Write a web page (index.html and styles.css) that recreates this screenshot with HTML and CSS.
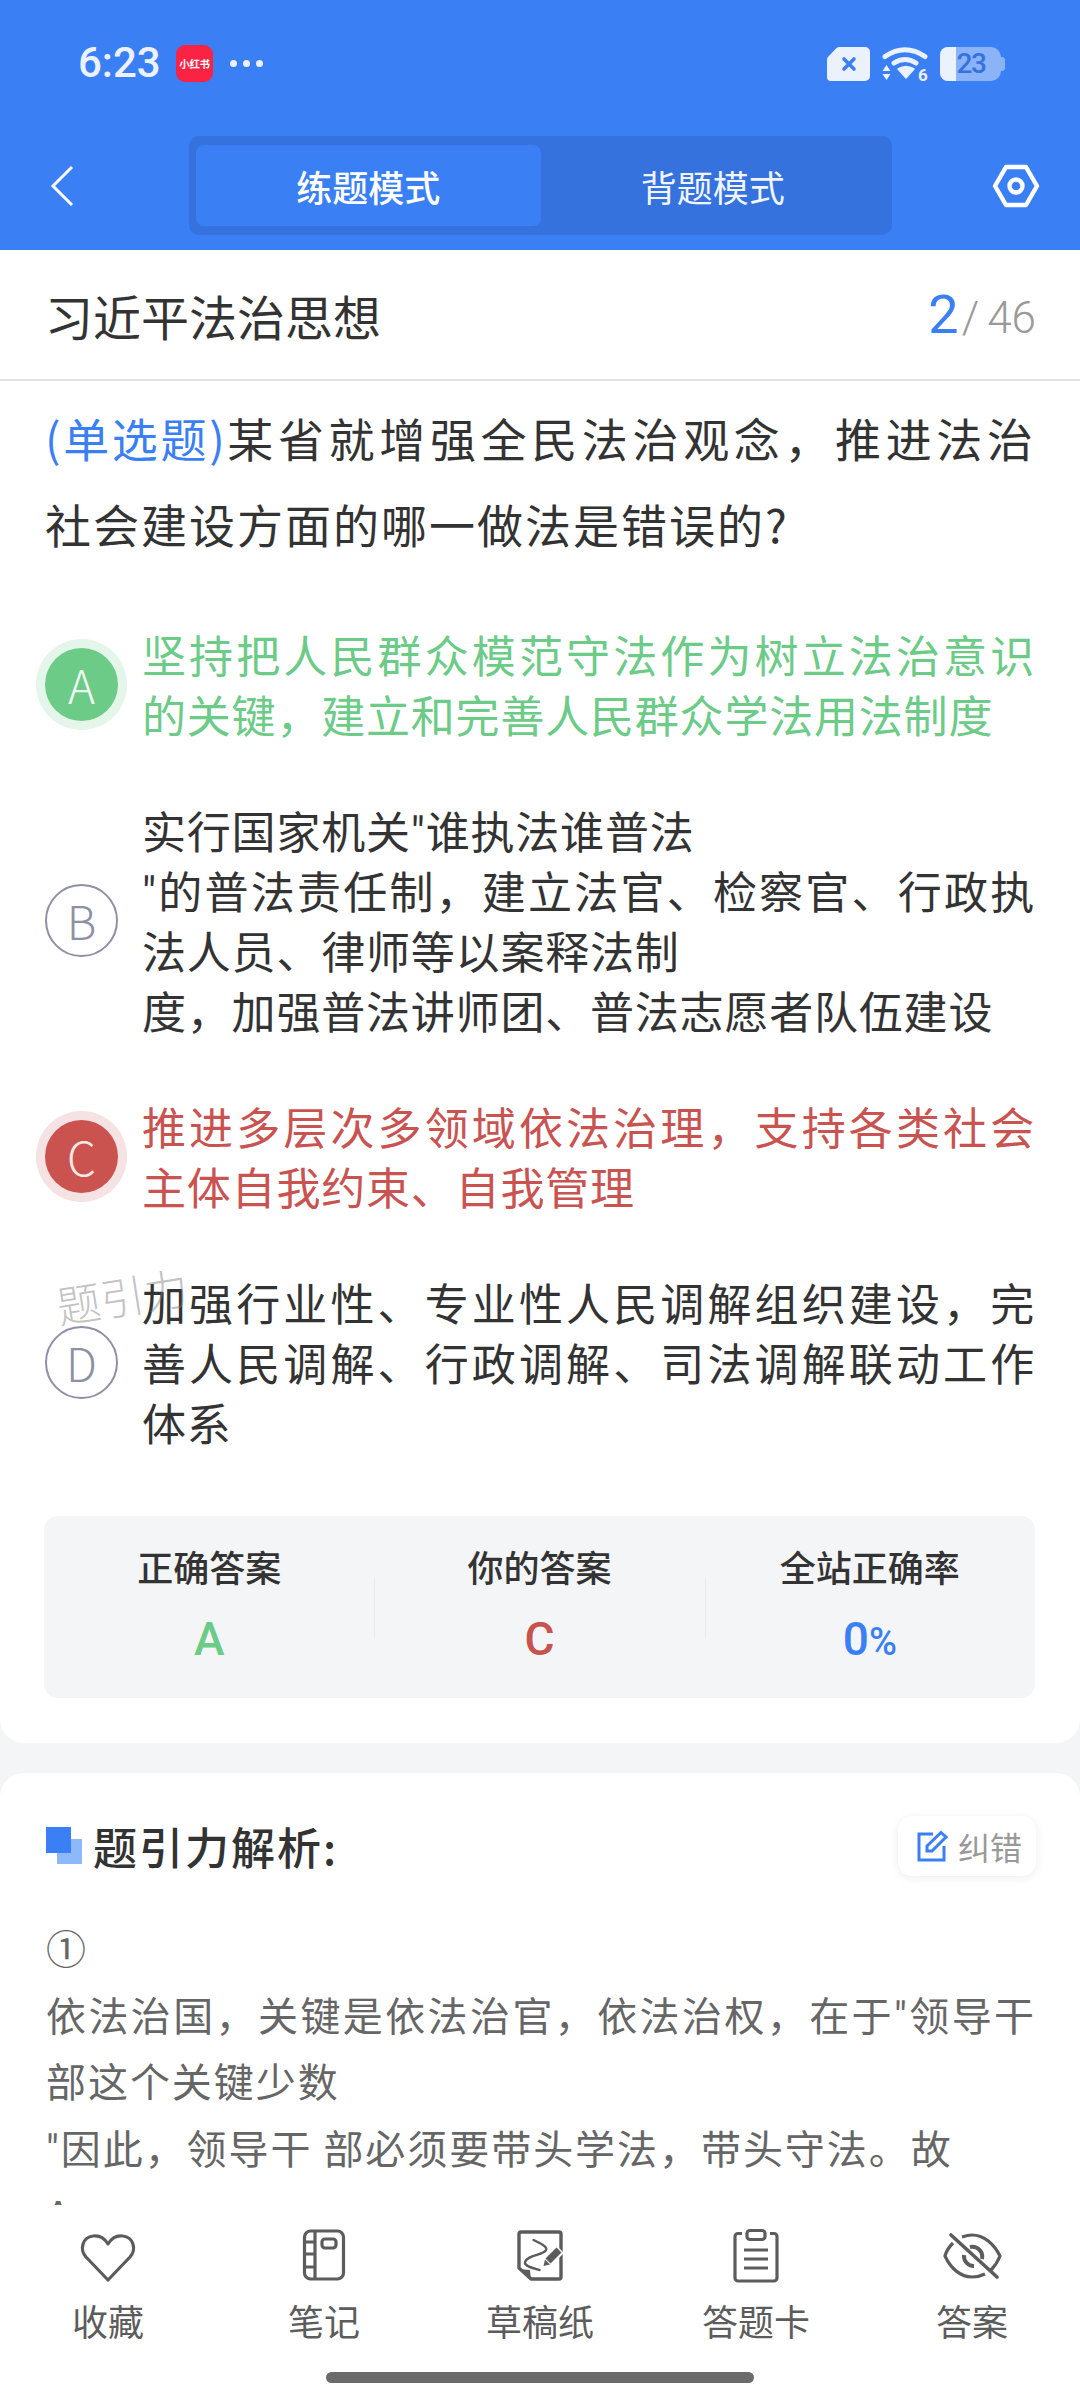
FILE: index.html
```html
<!DOCTYPE html>
<html lang="zh">
<head>
<meta charset="utf-8">
<title>练题模式</title>
<link rel="stylesheet" href="styles.css">
</head>
<body>
<div class="screen">
  <header class="top">
    <div class="status">
      <div class="status-left">
        <span class="time">6:23</span>
        <span class="app-badge">小红书</span>
        <span class="dots"><i></i><i></i><i></i></span>
      </div>
      <div class="status-right">
        <svg class="ic-sim" viewBox="0 0 43 34"><path d="M12 0H38a5 5 0 0 1 5 5V29a5 5 0 0 1-5 5H4a4 4 0 0 1-4-4V12a3 3 0 0 1 1-2L9 1.500A4 4 0 0 1 12 0Z" fill="#ebf1fd"/><path d="M17 12L27 22M27 12L17 22" stroke="#3b7ff5" stroke-width="3.600" stroke-linecap="round"/></svg>
        <svg class="ic-wifi" viewBox="0 0 46 36"><path d="M3 10.500Q23 -3 43 10.500" fill="none" stroke="#ebf1fd" stroke-width="5" stroke-linecap="round"/><path d="M12 17Q23 10 34 17" fill="none" stroke="#ebf1fd" stroke-width="5" stroke-linecap="round"/><path d="M16 23Q24 18 32 23L24 32Z" fill="#ebf1fd" stroke="#ebf1fd" stroke-width="1.500" stroke-linejoin="round"/><path d="M0.500 25L4.500 19L8.500 25ZM0.500 28L8.500 28L4.500 34Z" fill="#ebf1fd"/><text x="36" y="34.500" class="wifi-6">6</text></svg>
        <div class="battery">
          <div class="battery-body">
            <span class="battery-fill"></span>
            <span class="battery-num">23</span>
          </div>
          <span class="battery-nub"></span>
        </div>
      </div>
    </div>
    <nav class="navbar">
      <svg class="ic-back" viewBox="0 0 26 44"><path d="M24 3L5 22L24 41" fill="none" stroke="#fff" stroke-width="3"/></svg>
      <div class="tabs">
        <div class="tab tab-active">练题模式</div>
        <div class="tab">背题模式</div>
      </div>
      <svg class="ic-hex" viewBox="0 0 48 44"><path d="M14 3H34L45 22L34 41H14L3 22Z" fill="none" stroke="#fff" stroke-width="4.400" stroke-linejoin="round"/><circle cx="24" cy="22" r="6.500" fill="none" stroke="#fff" stroke-width="4.400"/></svg>
    </nav>
  </header>

  <main class="scroll">
    <section class="card card-question">
      <div class="title-row">
        <h1 class="chapter">习近平法治思想</h1>
        <div class="progress"><span class="progress-now">2</span><span class="progress-sep">/</span><span class="progress-total">46</span></div>
      </div>
      <p class="question"><span class="q-first"><span class="q-type">(单选题)</span>某省就增强全民法治观念，推进法治</span><span class="q-rest">社会建设方面的哪一做法是错误的?</span></p>

      <div class="option option-right">
        <span class="letter">A</span>
        <p class="option-text">坚持把人民群众模范守法作为树立法治意识的关键，建立和完善人民群众学法用法制度</p>
      </div>
      <div class="option">
        <span class="letter">B</span>
        <p class="option-text">实行国家机关<span class="quote">"</span>谁执法谁普法<br><span class="quote">"</span>的普法责任制，建立法官、检察官、行政执法人员、律师等以案释法制<br>度，加强普法讲师团、普法志愿者队伍建设</p>
      </div>
      <div class="option option-wrong">
        <span class="letter">C</span>
        <p class="option-text">推进多层次多领域依法治理，支持各类社会主体自我约束、自我管理</p>
      </div>
      <div class="option">
        <span class="letter">D</span>
        <p class="option-text">加强行业性、专业性人民调解组织建设，完善人民调解、行政调解、司法调解联动工作体系</p>
      </div>

      <div class="stats">
        <div class="stat"><div class="stat-label">正确答案</div><div class="stat-value green">A</div></div>
        <div class="stat"><div class="stat-label">你的答案</div><div class="stat-value red">C</div></div>
        <div class="stat"><div class="stat-label">全站正确率</div><div class="stat-value blue">0<small>%</small></div></div>
      </div>
    </section>

    <section class="card card-analysis">
      <div class="analysis-head">
        <div class="analysis-title">
          <span class="squares"><i class="sq-back"></i><i class="sq-front"></i></span>
          <h2>题引力解析:</h2>
        </div>
        <div class="fix-btn">
          <svg class="ic-fix" viewBox="0 0 34 34"><path d="M17 5H3V31H28V17" fill="none" stroke="#3b7ff5" stroke-width="3"/><path d="M11 17L25 3.500L30 8L16 22H11Z" fill="none" stroke="#3b7ff5" stroke-width="3"/></svg>
          <span>纠错</span>
        </div>
      </div>
      <div class="analysis-body">
        <p>①</p>
        <p>依法治国，关键是依法治官，依法治权，在于<span class="quote">"</span>领导干部这个关键少数<br><span class="quote">"</span>因此，领导干 部必须要带头学法，带头守法。故<br>A</p>
      </div>
    </section>
  </main>

  <div class="watermark">题引力</div>

  <footer class="bottom">
    <div class="tools">
      <div class="tool">
        <svg class="tool-ic" viewBox="0 0 60 60"><path d="M30 55L8 32C1 24 5 12 15 11C22 10 27 14 30 19C33 14 38 10 45 11C55 12 59 24 52 32Z" fill="none" stroke="#5c5c5c" stroke-width="3.200" stroke-linejoin="round"/></svg>
        <span>收藏</span>
      </div>
      <div class="tool">
        <svg class="tool-ic" viewBox="0 0 60 60"><rect x="10.500" y="6" width="39" height="48" rx="6" fill="none" stroke="#5c5c5c" stroke-width="3.200"/><path d="M21 6V54M10.500 17H21M10.500 29H21M10.500 42H21" fill="none" stroke="#5c5c5c" stroke-width="3.200"/><rect x="28" y="14" width="14" height="9" rx="3" fill="none" stroke="#5c5c5c" stroke-width="3.200"/></svg>
        <span>笔记</span>
      </div>
      <div class="tool">
        <svg class="tool-ic" viewBox="0 0 60 60"><path d="M11 7H49a2 2 0 0 1 2 2V52a2 2 0 0 1-2 2H21L9 43V9a2 2 0 0 1 2-2Z" fill="none" stroke="#5c5c5c" stroke-width="3.400" stroke-linejoin="round"/><path d="M9 44L21 55L20 45Z" fill="#5c5c5c"/><path d="M23.500 15C30 18 38 22 36 25C34 30 17 30 15 37C14 41 22 43 29.500 45" fill="none" stroke="#5c5c5c" stroke-width="2.400" stroke-linecap="round"/><path d="M37 37L50 24" stroke="#fff" stroke-width="11"/><path d="M38 36L49 25" stroke="#5c5c5c" stroke-width="7"/><path d="M33.500 41L35 34.500L40 39.500Z" fill="#5c5c5c"/></svg>
        <span>草稿纸</span>
      </div>
      <div class="tool">
        <svg class="tool-ic" viewBox="0 0 60 60"><path d="M16 8.500H12a3 3 0 0 0-3 3V53a3 3 0 0 0 3 3H48a3 3 0 0 0 3-3V11.500a3 3 0 0 0-3-3H44" fill="none" stroke="#5c5c5c" stroke-width="3.200"/><rect x="21" y="5.500" width="18" height="9" rx="3" fill="none" stroke="#5c5c5c" stroke-width="3.200"/><path d="M18 25H42M18 34H42M18 43H42" stroke="#5c5c5c" stroke-width="3.200"/></svg>
        <span>答题卡</span>
      </div>
      <div class="tool">
        <svg class="tool-ic" viewBox="0 0 60 60"><path d="M11 18C7 22 4 27 3 31C9 44 19 52 30 52C35 52 39 51 43 49M20 12C23 11 27 10 30 10C42 10 52 19 58 31C56 36 53 41 49 45" fill="none" stroke="#5c5c5c" stroke-width="3.200"/><path d="M9 10L55 52" stroke="#5c5c5c" stroke-width="3.600" stroke-linecap="round"/><path d="M28 22A10 10 0 0 1 40 34M22 30A10 10 0 0 0 32 41" fill="none" stroke="#5c5c5c" stroke-width="4"/></svg>
        <span>答案</span>
      </div>
    </div>
    <div class="home-bar"></div>
  </footer>
</div>
</body>
</html>
```

FILE: styles.css
```css
* { box-sizing: border-box; }
html, body { margin: 0; padding: 0; }
body { font-family: "Noto Sans CJK SC", "Noto Sans", sans-serif; background: #f4f5f7; color: #333; }
p, h1, h2 { margin: 0; font-weight: 400; }

.screen { position: relative; width: 1080px; height: 2400px; overflow: hidden; background: #f4f5f7; }

/* header */
.top { height: 250px; background: #3b7ff5; }
.status { height: 136px; padding: 44px 75px 0 78px; display: flex; justify-content: space-between; align-items: flex-start; }
.status-left { display: flex; align-items: center; height: 38px; }
.time { flex: 0 0 98px; font-family: Roboto, sans-serif; font-size: 42px; font-weight: 500; color: #ebf1fd; line-height: 38px; }
.app-badge { flex: 0 0 37px; height: 37px; border-radius: 9px; background: #fb2343; color: #fff; font-size: 10.500px; font-weight: 700; display: flex; align-items: center; justify-content: center; white-space: nowrap; letter-spacing: -.3px; }
.dots { display: flex; gap: 6px; margin-left: 17px; }
.dots i { width: 7px; height: 7px; border-radius: 50%; background: #ebf1fd; }
.status-right { display: flex; align-items: center; gap: 12px; padding-top: 2px; }
.ic-sim { width: 43px; height: 34px; }
.ic-wifi { width: 46px; height: 36px; }
.wifi-6 { font-family: Roboto, sans-serif; font-size: 17px; font-weight: 700; fill: #ebf1fd; }
.battery { display: flex; align-items: center; }
.battery-body { position: relative; width: 61px; height: 34px; border-radius: 8px 10px 10px 8px; background: #8ab3f8; overflow: hidden; }
.battery-fill { position: absolute; left: 0; top: 0; bottom: 0; width: 16px; background: #ebf1fd; }
.battery-num { position: absolute; left: 16px; top: 0; width: 30px; text-align: center; font-family: Roboto, sans-serif; font-size: 28px; font-weight: 500; line-height: 34px; color: #3572de; letter-spacing: -1.500px; }
.battery-nub { width: 4px; height: 14px; background: #8ab3f8; border-radius: 0 3px 3px 0; }

.navbar { display: flex; align-items: center; height: 99px; padding: 0 40px 0 48px; }
.ic-back { width: 26px; height: 44px; }
.tabs { display: flex; width: 703px; height: 99px; margin-left: 115px; padding: 9px 7px; background: #3572de; border-radius: 10px; }
.tab { flex: 1; display: flex; align-items: center; justify-content: center; color: #f0f5ff; font-size: 36px; border-radius: 8px; }
.tab-active { background: #3b7ff5; font-weight: 500; color: #fff; }
.ic-hex { width: 48px; height: 44px; margin-left: auto; }

/* question card */
.card { background: #fff; }
.card-question { border-radius: 0 0 24px 24px; padding-bottom: 45px; }
.title-row { height: 131px; padding: 0 44px 0 45px; display: flex; align-items: center; justify-content: space-between; border-bottom: 2px solid #e1e1e1; }
.chapter { font-size: 48px; color: #333; }
.progress { display: flex; align-items: baseline; font-family: Roboto, "Noto Sans", sans-serif; color: #999; font-size: 44px; font-weight: 300; }
.progress-now { color: #3b7ff5; font-size: 54px; font-weight: 400; }
.progress-sep { margin: 0 8px 0 3px; }
.question { margin: 0 45px; padding-top: 13px; font-size: 46px; line-height: 86px; letter-spacing: 2px; color: #333; }
.q-first { display: block; white-space: nowrap; text-align: justify; text-align-last: justify; }
.q-rest { display: block; }
.q-type { color: #3b7ff5; letter-spacing: 0; }

.option { display: flex; align-items: center; margin: 0 45px; gap: 24px; }
.option-text { flex: 1; font-size: 44px; line-height: 60px; letter-spacing: .8px; color: #333; text-align: justify; }
.quote { font-family: Roboto, sans-serif; line-height: 0; }
.letter { flex: 0 0 73px; height: 73px; border-radius: 50%; display: flex; align-items: center; justify-content: center; border: 2px solid #8e91a5; color: #8e91a5; font-size: 46px; font-weight: 300; }
.option-right .letter { background: #6ccb87; border: 0; color: #f0faf3; box-shadow: 0 0 0 9px #e4f6ea; }
.option-right .option-text { color: #6ccb87; }
.option-wrong .letter { background: #cb534f; border: 0; color: #fae8e7; box-shadow: 0 0 0 9px #f5e2e2; }
.option-wrong .option-text { color: #c95350; }
.option-right { margin-top: 58px; }
.option + .option { margin-top: 56px; }

.stats { display: flex; margin: 64px 45px 0 44px; height: 182px; background: #f4f5f7; border-radius: 14px; }
.stat { flex: 1; padding-top: 28px; text-align: center; position: relative; }
.stat + .stat::before { content: ""; position: absolute; left: 0; top: 62px; height: 60px; width: 1px; background: #ecedf0; }
.stat-label { font-size: 36px; font-weight: 500; line-height: 44px; color: #333; }
.stat-value { margin-top: 23px; font-family: Roboto, sans-serif; font-size: 46px; font-weight: 500; line-height: 56px; }
.stat-value small { font-size: 38px; }
.green { color: #6ccb87; }
.red { color: #c8524e; }
.blue { color: #3b7ff5; }

/* analysis card */
.card-analysis { margin-top: 30px; border-radius: 24px 24px 0 0; padding: 43px 44px 0 46px; height: 500px; }
.analysis-head { display: flex; align-items: center; justify-content: space-between; height: 60px; }
.analysis-title { display: flex; align-items: center; gap: 11px; }
.squares { position: relative; width: 36px; height: 38px; }
.sq-front { position: absolute; left: 0; top: 0; width: 25px; height: 26px; background: #3b7ff5; }
.sq-back { position: absolute; left: 11px; top: 12px; width: 25px; height: 25px; background: #8db8fa; }
.analysis-title h2 { font-size: 44px; font-weight: 500; letter-spacing: 2px; color: #333; }
.fix-btn { display: flex; align-items: center; gap: 8px; height: 60px; width: 138px; padding-left: 18px; border-radius: 14px; background: #fff; box-shadow: 0 2px 10px rgba(0,0,0,.08); color: #999; font-size: 32px; }
.ic-fix { width: 34px; height: 34px; }
.analysis-body { margin-top: 38px; font-size: 40px; line-height: 66.500px; letter-spacing: 1.950px; color: #666; text-align: justify; }

/* watermark */
.watermark { position: absolute; left: 56px; top: 1265px; font-size: 44px; line-height: 60px; color: rgba(120,120,120,.45); font-weight: 300; transform: rotate(-9deg); }

/* bottom */
.bottom { position: absolute; left: 0; right: 0; bottom: 0; height: 195px; background: #fff; }
.tools { display: flex; justify-content: space-between; padding: 20px 0 0; }
.tool { width: 216px; display: flex; flex-direction: column; align-items: center; color: #5c5c5c; font-size: 36px; line-height: 50px; }
.tool-ic { width: 60px; height: 60px; margin-bottom: 10px; }
.home-bar { position: absolute; left: 326px; top: 167px; width: 428px; height: 11px; border-radius: 6px; background: #6b6b6b; }
```
